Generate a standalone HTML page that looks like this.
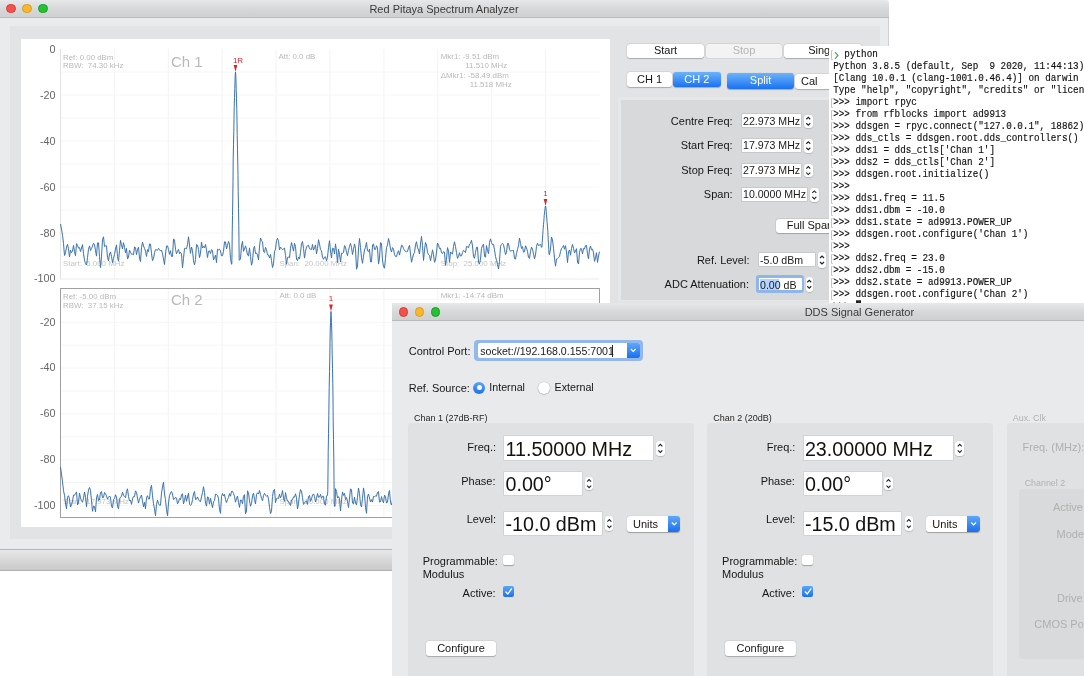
<!DOCTYPE html><html><head><meta charset="utf-8"><style>html,body{margin:0;padding:0;width:1084px;height:676px;overflow:hidden;background:#fff;position:relative;font-family:"Liberation Sans",sans-serif}</style></head><body><div style="position:absolute;left:0;top:0;width:1084px;height:676px;overflow:hidden;will-change:transform">
<div style="position:absolute;left:0px;top:0px;width:889px;height:17.5px;background:linear-gradient(#e7e8ea,#d6d7d9 55%,#cfd0d2);border-bottom:1px solid #b9babc;box-sizing:border-box;border-top-right-radius:3px"></div>
<div style="position:absolute;left:6.2px;top:3.6000000000000005px;width:9.6px;height:9.6px;border-radius:50%;background:#f4514d;box-sizing:border-box;border:0.5px solid #d63d39"></div>
<div style="position:absolute;left:22.2px;top:3.6000000000000005px;width:9.6px;height:9.6px;border-radius:50%;background:#f8b72c;box-sizing:border-box;border:0.5px solid #dc9c1e"></div>
<div style="position:absolute;left:38.2px;top:3.6000000000000005px;width:9.6px;height:9.6px;border-radius:50%;background:#25c135;box-sizing:border-box;border:0.5px solid #16a025"></div>
<div style="position:absolute;left:294.0px;top:2.0px;width:300px;height:14px;line-height:14px;font-size:11px;font-family:'Liberation Sans', sans-serif;color:#3a3a3a;text-align:center;white-space:pre;">Red Pitaya Spectrum Analyzer</div>
<div style="position:absolute;left:0px;top:17.5px;width:889px;height:531.5px;background:#eaebed"></div>
<div style="position:absolute;left:10px;top:26px;width:870px;height:513px;background:#e2e3e4"></div>
<div style="position:absolute;left:888px;top:17.5px;width:1px;height:531.5px;background:#cfd0d2"></div>
<div style="position:absolute;left:21px;top:39px;width:589px;height:488px;background:#ffffff"></div>
<svg style="position:absolute;left:0;top:0" width="1084" height="676"><line x1="114.4" y1="49" x2="114.4" y2="279" stroke="#f3f3f3" stroke-width="1"/><line x1="168.3" y1="49" x2="168.3" y2="279" stroke="#f3f3f3" stroke-width="1"/><line x1="222.2" y1="49" x2="222.2" y2="279" stroke="#f3f3f3" stroke-width="1"/><line x1="276.1" y1="49" x2="276.1" y2="279" stroke="#f3f3f3" stroke-width="1"/><line x1="330.0" y1="49" x2="330.0" y2="279" stroke="#f3f3f3" stroke-width="1"/><line x1="383.9" y1="49" x2="383.9" y2="279" stroke="#f3f3f3" stroke-width="1"/><line x1="437.8" y1="49" x2="437.8" y2="279" stroke="#f3f3f3" stroke-width="1"/><line x1="491.7" y1="49" x2="491.7" y2="279" stroke="#f3f3f3" stroke-width="1"/><line x1="545.6" y1="49" x2="545.6" y2="279" stroke="#f3f3f3" stroke-width="1"/><line x1="60.5" y1="72.0" x2="599.5" y2="72.0" stroke="#f6f6f6" stroke-width="1"/><line x1="60.5" y1="95.0" x2="599.5" y2="95.0" stroke="#f6f6f6" stroke-width="1"/><line x1="60.5" y1="118.0" x2="599.5" y2="118.0" stroke="#f6f6f6" stroke-width="1"/><line x1="60.5" y1="141.0" x2="599.5" y2="141.0" stroke="#f6f6f6" stroke-width="1"/><line x1="60.5" y1="164.0" x2="599.5" y2="164.0" stroke="#f6f6f6" stroke-width="1"/><line x1="60.5" y1="187.0" x2="599.5" y2="187.0" stroke="#f6f6f6" stroke-width="1"/><line x1="60.5" y1="210.0" x2="599.5" y2="210.0" stroke="#f6f6f6" stroke-width="1"/><line x1="60.5" y1="233.0" x2="599.5" y2="233.0" stroke="#f6f6f6" stroke-width="1"/><line x1="60.5" y1="256.0" x2="599.5" y2="256.0" stroke="#f6f6f6" stroke-width="1"/><line x1="60.5" y1="49" x2="60.5" y2="279" stroke="#e2e2e2" stroke-width="1"/><line x1="60.5" y1="279" x2="599.5" y2="279" stroke="#ececec" stroke-width="1"/></svg>
<div style="position:absolute;left:15.5px;top:41.7px;width:40px;height:14px;line-height:14px;font-size:10.8px;font-family:'Liberation Sans', sans-serif;color:#666;text-align:right;white-space:pre;">0</div>
<div style="position:absolute;left:15.5px;top:87.7px;width:40px;height:14px;line-height:14px;font-size:10.8px;font-family:'Liberation Sans', sans-serif;color:#666;text-align:right;white-space:pre;">-20</div>
<div style="position:absolute;left:15.5px;top:133.7px;width:40px;height:14px;line-height:14px;font-size:10.8px;font-family:'Liberation Sans', sans-serif;color:#666;text-align:right;white-space:pre;">-40</div>
<div style="position:absolute;left:15.5px;top:179.7px;width:40px;height:14px;line-height:14px;font-size:10.8px;font-family:'Liberation Sans', sans-serif;color:#666;text-align:right;white-space:pre;">-60</div>
<div style="position:absolute;left:15.5px;top:225.7px;width:40px;height:14px;line-height:14px;font-size:10.8px;font-family:'Liberation Sans', sans-serif;color:#666;text-align:right;white-space:pre;">-80</div>
<div style="position:absolute;left:15.5px;top:270.5px;width:40px;height:14px;line-height:14px;font-size:10.8px;font-family:'Liberation Sans', sans-serif;color:#666;text-align:right;white-space:pre;">-100</div>
<div style="position:absolute;left:63.0px;top:52.5px;width:300px;height:10px;line-height:10px;font-size:7.9px;font-family:'Liberation Sans', sans-serif;color:#b9b9b9;text-align:left;white-space:pre;">Ref: 0.00 dBm</div>
<div style="position:absolute;left:63.0px;top:61.3px;width:300px;height:10px;line-height:10px;font-size:7.9px;font-family:'Liberation Sans', sans-serif;color:#b9b9b9;text-align:left;white-space:pre;">RBW:  74.30 kHz</div>
<div style="position:absolute;left:171.0px;top:52.4px;width:300px;height:20px;line-height:20px;font-size:15px;font-family:'Liberation Sans', sans-serif;color:#b9b9b9;text-align:left;white-space:pre;">Ch 1</div>
<div style="position:absolute;left:278.5px;top:52.0px;width:300px;height:10px;line-height:10px;font-size:7.9px;font-family:'Liberation Sans', sans-serif;color:#b9b9b9;text-align:left;white-space:pre;">Att: 0.0 dB</div>
<div style="position:absolute;left:440.8px;top:52.0px;width:300px;height:10px;line-height:10px;font-size:7.9px;font-family:'Liberation Sans', sans-serif;color:#b9b9b9;text-align:left;white-space:pre;">Mkr1: -9.51 dBm</div>
<div style="position:absolute;left:465.3px;top:61.4px;width:300px;height:10px;line-height:10px;font-size:7.9px;font-family:'Liberation Sans', sans-serif;color:#b9b9b9;text-align:left;white-space:pre;">11.510 MHz</div>
<div style="position:absolute;left:440.8px;top:70.9px;width:300px;height:10px;line-height:10px;font-size:7.9px;font-family:'Liberation Sans', sans-serif;color:#b9b9b9;text-align:left;white-space:pre;">ΔMkr1: -58.49 dBm</div>
<div style="position:absolute;left:469.7px;top:80.0px;width:300px;height:10px;line-height:10px;font-size:7.9px;font-family:'Liberation Sans', sans-serif;color:#b9b9b9;text-align:left;white-space:pre;">11.518 MHz</div>
<div style="position:absolute;left:63.0px;top:258.6px;width:300px;height:10px;line-height:10px;font-size:7.9px;font-family:'Liberation Sans', sans-serif;color:#c6c6c6;text-align:left;white-space:pre;">Start:  5.000 MHz</div>
<div style="position:absolute;left:279.4px;top:258.6px;width:300px;height:10px;line-height:10px;font-size:7.9px;font-family:'Liberation Sans', sans-serif;color:#c6c6c6;text-align:left;white-space:pre;">Span:  20.000 MHz</div>
<div style="position:absolute;left:440.8px;top:258.6px;width:300px;height:10px;line-height:10px;font-size:7.9px;font-family:'Liberation Sans', sans-serif;color:#c6c6c6;text-align:left;white-space:pre;">Stop:  25.000 MHz</div>
<svg style="position:absolute;left:0;top:0" width="1084" height="676"><line x1="114.4" y1="288" x2="114.4" y2="517" stroke="#f3f3f3" stroke-width="1"/><line x1="168.3" y1="288" x2="168.3" y2="517" stroke="#f3f3f3" stroke-width="1"/><line x1="222.2" y1="288" x2="222.2" y2="517" stroke="#f3f3f3" stroke-width="1"/><line x1="276.1" y1="288" x2="276.1" y2="517" stroke="#f3f3f3" stroke-width="1"/><line x1="330.0" y1="288" x2="330.0" y2="517" stroke="#f3f3f3" stroke-width="1"/><line x1="383.9" y1="288" x2="383.9" y2="517" stroke="#f3f3f3" stroke-width="1"/><line x1="437.8" y1="288" x2="437.8" y2="517" stroke="#f3f3f3" stroke-width="1"/><line x1="491.7" y1="288" x2="491.7" y2="517" stroke="#f3f3f3" stroke-width="1"/><line x1="545.6" y1="288" x2="545.6" y2="517" stroke="#f3f3f3" stroke-width="1"/><line x1="60.5" y1="299.4" x2="599.5" y2="299.4" stroke="#f6f6f6" stroke-width="1"/><line x1="60.5" y1="322.4" x2="599.5" y2="322.4" stroke="#f6f6f6" stroke-width="1"/><line x1="60.5" y1="345.2" x2="599.5" y2="345.2" stroke="#f6f6f6" stroke-width="1"/><line x1="60.5" y1="368.1" x2="599.5" y2="368.1" stroke="#f6f6f6" stroke-width="1"/><line x1="60.5" y1="391.1" x2="599.5" y2="391.1" stroke="#f6f6f6" stroke-width="1"/><line x1="60.5" y1="413.9" x2="599.5" y2="413.9" stroke="#f6f6f6" stroke-width="1"/><line x1="60.5" y1="436.9" x2="599.5" y2="436.9" stroke="#f6f6f6" stroke-width="1"/><line x1="60.5" y1="459.8" x2="599.5" y2="459.8" stroke="#f6f6f6" stroke-width="1"/><line x1="60.5" y1="482.6" x2="599.5" y2="482.6" stroke="#f6f6f6" stroke-width="1"/><line x1="60.5" y1="505.6" x2="599.5" y2="505.6" stroke="#f6f6f6" stroke-width="1"/><rect x="60.5" y="288.5" width="539.0" height="229" fill="none" stroke="#a0a0a0" stroke-width="1"/></svg>
<div style="position:absolute;left:15.5px;top:314.5px;width:40px;height:14px;line-height:14px;font-size:10.8px;font-family:'Liberation Sans', sans-serif;color:#666;text-align:right;white-space:pre;">-20</div>
<div style="position:absolute;left:15.5px;top:360.2px;width:40px;height:14px;line-height:14px;font-size:10.8px;font-family:'Liberation Sans', sans-serif;color:#666;text-align:right;white-space:pre;">-40</div>
<div style="position:absolute;left:15.5px;top:406.2px;width:40px;height:14px;line-height:14px;font-size:10.8px;font-family:'Liberation Sans', sans-serif;color:#666;text-align:right;white-space:pre;">-60</div>
<div style="position:absolute;left:15.5px;top:452.2px;width:40px;height:14px;line-height:14px;font-size:10.8px;font-family:'Liberation Sans', sans-serif;color:#666;text-align:right;white-space:pre;">-80</div>
<div style="position:absolute;left:15.5px;top:497.7px;width:40px;height:14px;line-height:14px;font-size:10.8px;font-family:'Liberation Sans', sans-serif;color:#666;text-align:right;white-space:pre;">-100</div>
<div style="position:absolute;left:63.0px;top:292.0px;width:300px;height:10px;line-height:10px;font-size:7.9px;font-family:'Liberation Sans', sans-serif;color:#b9b9b9;text-align:left;white-space:pre;">Ref: -5.00 dBm</div>
<div style="position:absolute;left:63.0px;top:301.0px;width:300px;height:10px;line-height:10px;font-size:7.9px;font-family:'Liberation Sans', sans-serif;color:#b9b9b9;text-align:left;white-space:pre;">RBW:  37.15 kHz</div>
<div style="position:absolute;left:171.0px;top:290.0px;width:300px;height:20px;line-height:20px;font-size:15px;font-family:'Liberation Sans', sans-serif;color:#b9b9b9;text-align:left;white-space:pre;">Ch 2</div>
<div style="position:absolute;left:279.4px;top:291.3px;width:300px;height:10px;line-height:10px;font-size:7.9px;font-family:'Liberation Sans', sans-serif;color:#b9b9b9;text-align:left;white-space:pre;">Att: 0.0 dB</div>
<div style="position:absolute;left:440.8px;top:291.3px;width:300px;height:10px;line-height:10px;font-size:7.9px;font-family:'Liberation Sans', sans-serif;color:#b9b9b9;text-align:left;white-space:pre;">Mkr1: -14.74 dBm</div>
<div style="position:absolute;left:63.0px;top:497.0px;width:300px;height:10px;line-height:10px;font-size:7.9px;font-family:'Liberation Sans', sans-serif;color:#c6c6c6;text-align:left;white-space:pre;">Start:  17.973 MHz</div>
<div style="position:absolute;left:279.4px;top:497.0px;width:300px;height:10px;line-height:10px;font-size:7.9px;font-family:'Liberation Sans', sans-serif;color:#c6c6c6;text-align:left;white-space:pre;">Span:  10.000 MHz</div>
<div style="position:absolute;left:440.8px;top:497.0px;width:300px;height:10px;line-height:10px;font-size:7.9px;font-family:'Liberation Sans', sans-serif;color:#c6c6c6;text-align:left;white-space:pre;">Stop:  27.973 MHz</div>
<svg style="position:absolute;left:0;top:0" width="1084" height="676"><polyline points="60.5,224.0 61.5,229.1 62.5,235.2 63.5,243.5 64.5,255.5 65.5,252.9 66.5,247.1 67.5,244.4 68.5,248.8 69.5,256.7 70.5,250.2 71.5,252.6 72.5,251.3 73.5,245.4 74.5,251.7 75.5,255.7 76.5,243.6 77.5,245.5 78.5,248.1 79.5,247.6 80.5,251.5 81.5,248.0 82.5,244.6 83.5,253.6 84.5,260.2 85.5,263.6 86.5,265.0 87.5,257.6 88.5,249.3 89.5,245.9 90.5,250.5 91.5,248.6 92.5,246.1 93.5,243.3 94.5,244.6 95.5,250.8 96.5,256.1 97.5,242.9 98.5,242.9 99.5,256.3 100.5,267.6 101.5,256.8 102.5,239.7 103.5,236.8 104.5,246.5 105.5,245.8 106.5,245.8 107.5,257.2 108.5,260.9 109.5,254.0 110.5,251.9 111.5,256.4 112.5,262.6 113.5,258.4 114.5,254.6 115.5,249.1 116.5,244.9 117.5,256.5 118.5,261.2 119.5,250.4 120.5,240.4 121.5,244.6 122.5,249.0 123.5,242.7 124.5,247.4 125.5,252.7 126.5,248.4 127.5,259.0 128.5,257.1 129.5,250.2 130.5,252.1 131.5,254.3 132.5,254.1 133.5,254.8 134.5,247.0 135.5,247.6 136.5,254.6 137.5,249.5 138.5,247.2 139.5,258.0 140.5,261.6 141.5,247.8 142.5,242.1 143.5,246.0 144.5,248.3 145.5,251.1 146.5,256.4 147.5,249.6 148.5,251.5 149.5,243.9 150.5,244.1 151.5,253.6 152.5,260.7 153.5,258.5 154.5,252.8 155.5,249.6 156.5,249.8 157.5,250.4 158.5,248.3 159.5,249.5 160.5,251.0 161.5,250.0 162.5,253.9 163.5,259.0 164.5,264.5 165.5,254.0 166.5,246.1 167.5,245.8 168.5,249.5 169.5,254.3 170.5,250.7 171.5,256.5 172.5,256.4 173.5,238.9 174.5,240.1 175.5,249.2 176.5,253.8 177.5,251.3 178.5,249.3 179.5,253.7 180.5,252.2 181.5,254.1 182.5,267.7 183.5,258.4 184.5,248.3 185.5,248.4 186.5,248.8 187.5,244.6 188.5,236.8 189.5,245.1 190.5,253.4 191.5,247.1 192.5,250.4 193.5,260.9 194.5,264.8 195.5,259.7 196.5,244.6 197.5,245.1 198.5,249.4 199.5,257.6 200.5,253.2 201.5,242.0 202.5,248.0 203.5,246.4 204.5,247.9 205.5,244.4 206.5,249.8 207.5,257.5 208.5,251.2 209.5,250.9 210.5,253.6 211.5,249.7 212.5,250.5 213.5,260.0 214.5,257.7 215.5,255.1 216.5,262.6 217.5,249.2 218.5,249.9 219.5,249.1 220.5,250.9 221.5,255.8 222.5,255.6 223.5,251.3 224.5,241.8 225.5,241.9 226.5,248.9 227.5,245.3 228.5,241.5 229.5,244.2 230.5,258.4 231.5,264.2 231.5,264.2 231.8,264.2 232.0,253.0 232.2,234.0 232.5,215.6 232.5,215.6 232.8,198.1 233.0,181.3 233.2,158.9 233.5,144.8 233.5,144.8 233.8,131.6 234.0,118.6 234.2,107.5 234.5,97.4 234.5,97.4 234.8,88.5 235.0,81.0 235.2,75.2 235.5,72.0 235.5,72.0 235.8,75.2 236.0,81.5 236.2,89.4 236.5,98.8 236.5,98.8 236.8,109.5 237.0,121.3 237.2,135.6 237.5,149.8 237.5,149.8 237.8,164.8 238.0,175.7 238.2,191.6 238.5,208.3 238.5,208.3 238.8,225.7 239.0,243.8 239.2,260.2 239.5,260.2 239.5,260.2 240.5,258.9 241.5,246.0 242.5,241.4 243.5,251.3 244.5,249.0 245.5,245.9 246.5,249.5 247.5,255.0 248.5,255.9 249.5,247.9 250.5,256.6 251.5,265.2 252.5,261.5 253.5,248.7 254.5,246.4 255.5,253.5 256.5,253.1 257.5,255.1 258.5,259.8 259.5,247.1 260.5,238.0 261.5,240.5 262.5,242.1 263.5,251.6 264.5,252.5 265.5,247.4 266.5,249.6 267.5,254.8 268.5,254.9 269.5,257.9 270.5,254.5 271.5,260.5 272.5,267.5 273.5,263.8 274.5,251.8 275.5,249.2 276.5,240.6 277.5,238.3 278.5,241.2 279.5,249.9 280.5,247.1 281.5,248.3 282.5,249.6 283.5,248.9 284.5,248.0 285.5,255.5 286.5,264.3 287.5,257.4 288.5,257.1 289.5,257.9 290.5,248.2 291.5,242.6 292.5,246.7 293.5,251.1 294.5,243.3 295.5,246.5 296.5,259.0 297.5,260.7 298.5,257.1 299.5,258.9 300.5,252.5 301.5,243.7 302.5,241.5 303.5,248.3 304.5,258.1 305.5,251.3 306.5,247.0 307.5,245.7 308.5,245.1 309.5,248.7 310.5,249.1 311.5,249.6 312.5,244.5 313.5,250.1 314.5,247.9 315.5,244.9 316.5,253.8 317.5,248.5 318.5,239.7 319.5,243.8 320.5,249.8 321.5,250.8 322.5,257.1 323.5,259.3 324.5,257.2 325.5,256.8 326.5,260.8 327.5,257.2 328.5,247.6 329.5,240.7 330.5,251.0 331.5,257.8 332.5,248.3 333.5,248.5 334.5,253.9 335.5,243.9 336.5,251.6 337.5,262.5 338.5,249.2 339.5,254.4 340.5,262.0 341.5,253.1 342.5,253.3 343.5,252.6 344.5,245.6 345.5,247.1 346.5,252.5 347.5,255.6 348.5,250.3 349.5,246.4 350.5,243.5 351.5,247.4 352.5,254.5 353.5,249.5 354.5,243.9 355.5,248.5 356.5,269.2 357.5,266.1 358.5,249.0 359.5,238.5 360.5,247.4 361.5,257.8 362.5,263.3 363.5,256.1 364.5,250.0 365.5,247.3 366.5,242.4 367.5,250.8 368.5,251.6 369.5,249.2 370.5,261.9 371.5,261.9 372.5,244.8 373.5,244.0 374.5,249.3 375.5,249.4 376.5,245.7 377.5,247.7 378.5,264.1 379.5,258.1 380.5,242.7 381.5,243.3 382.5,259.9 383.5,266.6 384.5,268.2 385.5,258.3 386.5,247.4 387.5,245.1 388.5,238.5 389.5,242.3 390.5,249.2 391.5,251.9 392.5,247.6 393.5,249.2 394.5,254.5 395.5,256.4 396.5,256.7 397.5,252.7 398.5,250.7 399.5,255.1 400.5,250.2 401.5,245.2 402.5,245.6 403.5,248.8 404.5,250.1 405.5,251.6 406.5,251.7 407.5,251.5 408.5,247.8 409.5,245.3 410.5,254.0 411.5,262.2 412.5,258.4 413.5,254.0 414.5,252.7 415.5,244.9 416.5,241.7 417.5,247.7 418.5,249.9 419.5,254.0 420.5,244.0 421.5,236.5 422.5,245.5 423.5,260.5 424.5,250.1 425.5,242.5 426.5,245.1 427.5,252.4 428.5,254.6 429.5,255.3 430.5,260.8 431.5,255.9 432.5,249.8 433.5,254.8 434.5,262.3 435.5,260.1 436.5,252.0 437.5,243.0 438.5,244.9 439.5,248.7 440.5,248.1 441.5,252.8 442.5,253.7 443.5,251.7 444.5,252.2 445.5,265.4 446.5,259.2 447.5,247.6 448.5,251.1 449.5,262.3 450.5,251.9 451.5,253.1 452.5,254.2 453.5,246.4 454.5,241.8 455.5,246.6 456.5,252.6 457.5,258.4 458.5,256.4 459.5,252.7 460.5,256.1 461.5,255.7 462.5,252.6 463.5,250.4 464.5,251.0 465.5,252.6 466.5,246.5 467.5,246.7 468.5,247.9 469.5,244.1 470.5,243.3 471.5,240.3 472.5,246.0 473.5,256.6 474.5,258.3 475.5,252.5 476.5,247.3 477.5,247.2 478.5,262.6 479.5,263.9 480.5,259.0 481.5,248.4 482.5,245.4 483.5,244.1 484.5,256.1 485.5,257.3 486.5,245.6 487.5,250.4 488.5,253.6 489.5,242.4 490.5,238.9 491.5,242.7 492.5,244.7 493.5,244.4 494.5,249.9 495.5,256.5 496.5,260.4 497.5,264.3 498.5,269.0 499.5,261.3 500.5,246.3 501.5,244.3 502.5,243.3 503.5,244.5 504.5,249.6 505.5,254.6 506.5,252.6 507.5,243.5 508.5,243.5 509.5,249.4 510.5,251.3 511.5,250.7 512.5,250.4 513.5,250.5 514.5,258.6 515.5,259.1 516.5,253.5 517.5,249.3 518.5,245.8 519.5,238.1 520.5,243.4 521.5,248.5 522.5,246.6 523.5,252.2 524.5,251.8 525.5,245.8 526.5,247.9 527.5,251.4 528.5,257.3 529.5,258.4 530.5,251.4 531.5,247.1 532.5,249.1 533.5,253.8 534.5,258.9 535.5,254.9 536.5,246.3 537.5,243.2 538.5,245.7 539.5,245.0 540.5,244.3 541.5,247.3 541.5,247.3 541.8,247.3 542.0,246.5 542.2,242.2 542.5,238.1 542.5,238.1 542.8,234.2 543.0,230.4 543.2,228.4 543.5,224.7 543.5,224.7 543.8,221.3 544.0,218.7 544.2,215.7 544.5,212.9 544.5,212.9 544.8,210.5 545.0,208.4 545.2,206.9 545.5,206.0 545.5,206.0 545.8,206.9 546.0,209.0 546.2,211.6 546.5,214.6 546.5,214.6 546.8,218.0 547.0,221.7 547.2,223.1 547.5,226.9 547.5,226.9 547.8,230.9 548.0,235.1 548.2,239.5 548.5,244.2 548.5,244.2 548.8,249.1 549.0,254.1 549.2,254.6 549.5,254.6 549.5,254.6 550.5,249.0 551.5,237.1 552.5,239.9 553.5,248.2 554.5,258.0 555.5,266.2 556.5,259.0 557.5,258.6 558.5,257.7 559.5,256.3 560.5,251.7 561.5,248.3 562.5,247.4 563.5,245.4 564.5,249.2 565.5,245.7 566.5,251.9 567.5,262.6 568.5,251.7 569.5,250.0 570.5,255.2 571.5,248.5 572.5,244.4 573.5,248.3 574.5,253.0 575.5,251.0 576.5,248.7 577.5,262.1 578.5,264.0 579.5,252.3 580.5,248.4 581.5,248.8 582.5,253.9 583.5,248.5 584.5,249.0 585.5,245.7 586.5,245.4 587.5,254.2 588.5,258.8 589.5,249.1 590.5,246.0 591.5,249.8 592.5,249.2 593.5,252.8 594.5,261.4 595.5,257.8 596.5,252.7 597.5,262.4 598.5,256.0 599.5,251.7" fill="none" stroke="#3a72ad" stroke-width="1"/><polyline points="60.5,467.0 61.5,474.1 62.5,481.9 63.5,490.7 64.5,495.2 65.5,503.0 66.5,508.8 67.5,497.2 68.5,495.7 69.5,498.9 70.5,507.0 71.5,504.8 72.5,501.4 73.5,495.1 74.5,495.3 75.5,493.7 76.5,491.9 77.5,504.8 78.5,503.0 79.5,493.0 80.5,498.1 81.5,500.6 82.5,502.3 83.5,498.1 84.5,492.0 85.5,497.3 86.5,506.7 87.5,496.3 88.5,489.9 89.5,487.5 90.5,490.3 91.5,500.9 92.5,511.3 93.5,506.1 94.5,506.5 95.5,511.9 96.5,497.8 97.5,494.5 98.5,500.5 99.5,500.0 100.5,492.3 101.5,491.6 102.5,497.7 103.5,497.4 104.5,492.4 105.5,493.9 106.5,495.8 107.5,499.1 108.5,497.5 109.5,496.0 110.5,497.2 111.5,506.6 112.5,507.9 113.5,499.6 114.5,498.6 115.5,494.7 116.5,497.1 117.5,506.3 118.5,508.9 119.5,499.2 120.5,497.2 121.5,496.2 122.5,492.2 123.5,495.2 124.5,496.7 125.5,497.7 126.5,491.5 127.5,488.8 128.5,496.5 129.5,501.1 130.5,500.1 131.5,504.4 132.5,499.0 133.5,496.5 134.5,496.7 135.5,490.9 136.5,492.3 137.5,498.1 138.5,503.1 139.5,499.2 140.5,496.9 141.5,495.0 142.5,500.9 143.5,506.8 144.5,502.3 145.5,508.8 146.5,497.5 147.5,495.7 148.5,499.1 149.5,498.9 150.5,488.4 151.5,485.3 152.5,495.8 153.5,503.8 154.5,508.9 155.5,515.7 156.5,504.5 157.5,500.1 158.5,503.6 159.5,505.3 160.5,505.2 161.5,493.1 162.5,486.8 163.5,482.2 164.5,494.0 165.5,499.6 166.5,509.6 167.5,515.7 168.5,503.1 169.5,495.5 170.5,493.0 171.5,491.5 172.5,494.0 173.5,499.6 174.5,499.0 175.5,497.2 176.5,498.2 177.5,503.8 178.5,502.0 179.5,498.5 180.5,499.6 181.5,494.9 182.5,493.7 183.5,503.9 184.5,500.4 185.5,495.0 186.5,501.3 187.5,497.0 188.5,493.1 189.5,504.0 190.5,505.4 191.5,504.4 192.5,499.6 193.5,493.9 194.5,491.5 195.5,499.4 196.5,499.2 197.5,496.9 198.5,499.6 199.5,501.1 200.5,501.7 201.5,496.8 202.5,492.6 203.5,486.7 204.5,492.5 205.5,503.2 206.5,506.1 207.5,496.9 208.5,497.5 209.5,504.2 210.5,498.4 211.5,503.0 212.5,507.7 213.5,501.9 214.5,500.3 215.5,494.2 216.5,494.5 217.5,495.3 218.5,498.4 219.5,509.7 220.5,513.3 221.5,496.6 222.5,493.6 223.5,495.9 224.5,494.2 225.5,499.6 226.5,502.6 227.5,499.5 228.5,497.5 229.5,493.6 230.5,496.2 231.5,491.3 232.5,491.3 233.5,493.4 234.5,496.3 235.5,502.2 236.5,498.4 237.5,496.0 238.5,502.5 239.5,507.4 240.5,500.0 241.5,500.2 242.5,503.8 243.5,496.3 244.5,494.6 245.5,513.9 246.5,511.0 247.5,490.8 248.5,493.1 249.5,500.9 250.5,506.2 251.5,503.6 252.5,495.7 253.5,493.2 254.5,499.5 255.5,504.0 256.5,494.4 257.5,492.8 258.5,494.1 259.5,490.5 260.5,494.5 261.5,498.3 262.5,500.8 263.5,495.5 264.5,493.3 265.5,495.2 266.5,496.3 267.5,495.3 268.5,498.9 269.5,507.3 270.5,513.6 271.5,511.4 272.5,496.4 273.5,490.3 274.5,489.3 275.5,502.6 276.5,498.6 277.5,498.2 278.5,498.6 279.5,494.1 280.5,497.9 281.5,495.5 282.5,490.5 283.5,497.9 284.5,501.4 285.5,492.6 286.5,497.9 287.5,501.2 288.5,501.5 289.5,503.9 290.5,505.5 291.5,499.9 292.5,499.8 293.5,496.9 294.5,497.2 295.5,493.8 296.5,497.7 297.5,509.0 298.5,503.4 299.5,494.6 300.5,489.6 301.5,491.2 302.5,497.6 303.5,504.4 304.5,503.2 305.5,501.2 306.5,501.1 307.5,504.4 308.5,496.4 309.5,495.4 310.5,501.4 311.5,498.9 312.5,495.1 313.5,493.9 314.5,496.4 315.5,502.0 316.5,498.5 317.5,493.6 318.5,497.4 319.5,497.0 320.5,494.4 321.5,498.4 322.5,496.3 323.5,496.3 324.5,504.1 325.5,505.2 326.5,496.1 327.0,496.1 327.2,495.4 327.5,495.4 327.5,495.4 327.8,491.2 328.0,472.1 328.2,452.4 328.5,433.7 328.5,433.7 328.8,415.8 329.0,398.9 329.2,387.3 329.5,371.6 329.5,371.6 329.8,357.2 330.0,343.2 330.2,332.1 330.5,322.7 330.5,322.7 330.8,315.5 331.0,311.5 331.2,315.4 331.5,322.7 331.5,322.7 331.8,332.0 332.0,342.5 332.2,354.8 332.5,368.4 332.5,368.4 332.8,383.2 333.0,399.0 333.2,420.8 333.5,439.5 333.5,439.5 333.8,459.2 334.0,480.5 334.2,502.0 334.5,506.4 334.5,506.4 334.8,506.4 335.0,506.4 335.5,488.6 336.5,491.3 337.5,498.1 338.5,496.6 339.5,498.6 340.5,510.9 341.5,499.7 342.5,491.9 343.5,495.4 344.5,493.4 345.5,499.6 346.5,497.6 347.5,501.3 348.5,507.5 349.5,498.1 350.5,488.8 351.5,489.8 352.5,503.1 353.5,504.0 354.5,497.1 355.5,503.1 356.5,504.9 357.5,497.2 358.5,488.0 359.5,493.6 360.5,504.6 361.5,506.9 362.5,498.2 363.5,487.9 364.5,494.4 365.5,507.3 366.5,513.3 367.5,496.6 368.5,494.0 369.5,498.1 370.5,502.0 371.5,499.6 372.5,502.1 373.5,496.4 374.5,496.6 375.5,496.0 376.5,496.2 377.5,492.3 378.5,491.6 379.5,502.1 380.5,501.8 381.5,496.6 382.5,500.7 383.5,502.8 384.5,495.1 385.5,496.7 386.5,503.0 387.5,502.2 388.5,493.9 389.5,490.5 390.5,502.6 391.5,505.0 392.5,500.2 393.5,498.8 394.5,500.0 395.5,496.0 396.5,492.8 397.5,493.3 398.5,494.3 399.5,493.7 400.5,494.2 401.5,498.0 402.5,495.5 403.5,498.1 404.5,496.2 405.5,503.3 406.5,510.5 407.5,502.6 408.5,495.8 409.5,497.3 410.5,495.6 411.5,489.4 412.5,492.3 413.5,496.3 414.5,496.0 415.5,499.1 416.5,505.3 417.5,507.8 418.5,508.0 419.5,503.8 420.5,497.6 421.5,496.9 422.5,496.4 423.5,496.1 424.5,494.1 425.5,490.1 426.5,494.2 427.5,496.4 428.5,494.6 429.5,498.4 430.5,503.3 431.5,505.7 432.5,506.4 433.5,490.1 434.5,489.8 435.5,491.7 436.5,508.0 437.5,513.3 438.5,492.4 439.5,495.5 440.5,501.6 441.5,499.3 442.5,496.3 443.5,490.8 444.5,499.7 445.5,503.8 446.5,499.0 447.5,497.2 448.5,500.9 449.5,498.2 450.5,497.7 451.5,492.4 452.5,487.3 453.5,494.3 454.5,501.2 455.5,501.2 456.5,494.8 457.5,496.4 458.5,501.0 459.5,502.6 460.5,510.6 461.5,510.1 462.5,492.2 463.5,487.5 464.5,500.1 465.5,511.4 466.5,509.2 467.5,502.8 468.5,494.3 469.5,494.1 470.5,497.7 471.5,491.0 472.5,485.8 473.5,494.0 474.5,517.2 475.5,515.9 476.5,496.6 477.5,493.1 478.5,495.6 479.5,496.7 480.5,504.3 481.5,498.0 482.5,495.4 483.5,503.3 484.5,499.5 485.5,500.2 486.5,500.4 487.5,500.1 488.5,501.2 489.5,494.5 490.5,487.2 491.5,485.2 492.5,489.8 493.5,495.1 494.5,500.8 495.5,504.7 496.5,506.8 497.5,502.0 498.5,495.0 499.5,490.9 500.5,487.9 501.5,494.9 502.5,502.8 503.5,502.8 504.5,497.8 505.5,498.0 506.5,502.6 507.5,500.8 508.5,502.7 509.5,502.4 510.5,502.0 511.5,503.1 512.5,494.7 513.5,491.3 514.5,489.7 515.5,493.2 516.5,507.6 517.5,510.9 518.5,501.0 519.5,501.6 520.5,506.4 521.5,506.6 522.5,501.6 523.5,491.2 524.5,491.9 525.5,500.8 526.5,507.5 527.5,498.5 528.5,492.3 529.5,492.0 530.5,491.3 531.5,493.7 532.5,501.3 533.5,495.7 534.5,499.1 535.5,512.5 536.5,508.7 537.5,497.3 538.5,493.2 539.5,498.3 540.5,507.1 541.5,505.5 542.5,504.3 543.5,499.0 544.5,497.3 545.5,496.2 546.5,500.3 547.5,500.9 548.5,491.7 549.5,493.5 550.5,495.6 551.5,493.4 552.5,495.3 553.5,505.9 554.5,513.9 555.5,506.7 556.5,496.6 557.5,493.8 558.5,505.9 559.5,502.4 560.5,495.5 561.5,492.2 562.5,493.5 563.5,493.1 564.5,497.5 565.5,502.7 566.5,501.7 567.5,499.7 568.5,498.9 569.5,505.9 570.5,495.6 571.5,489.8 572.5,493.7 573.5,493.5 574.5,492.7 575.5,496.0 576.5,497.2 577.5,493.7 578.5,498.9 579.5,510.3 580.5,507.1 581.5,499.9 582.5,498.6 583.5,498.0 584.5,500.2 585.5,503.4 586.5,495.2 587.5,487.8 588.5,493.0 589.5,496.2 590.5,501.5 591.5,500.0 592.5,508.0 593.5,515.7 594.5,498.9 595.5,492.0 596.5,488.6 597.5,485.0 598.5,489.5 599.5,498.8" fill="none" stroke="#3a72ad" stroke-width="1"/><path d="M233.7,65 L237.3,65 L235.5,72 Z" fill="#d9232a"/><path d="M543.7,199 L547.3,199 L545.5,206 Z" fill="#d9232a"/><path d="M329.2,304.5 L332.8,304.5 L331,311.5 Z" fill="#d9232a"/></svg>
<div style="position:absolute;left:223.0px;top:55.7px;width:30px;height:10px;line-height:10px;font-size:8px;font-family:'Liberation Sans', sans-serif;color:#d9232a;text-align:center;white-space:pre;">1R</div>
<div style="position:absolute;left:530.5px;top:189.0px;width:30px;height:10px;line-height:10px;font-size:8px;font-family:'Liberation Sans', sans-serif;color:#d9232a;text-align:center;white-space:pre;">1</div>
<div style="position:absolute;left:316.0px;top:294.0px;width:30px;height:10px;line-height:10px;font-size:8px;font-family:'Liberation Sans', sans-serif;color:#d9232a;text-align:center;white-space:pre;">1</div>
<div style="position:absolute;left:0px;top:549px;width:889px;height:22px;background:linear-gradient(#e8e8e8,#c9c9c9);border-top:1px solid #b5b5b5;border-bottom:1px solid #b0b0b0;box-sizing:border-box"></div>
<div style="position:absolute;left:627px;top:44px;width:77px;height:14px;background:#ffffff;border-radius:3px;box-shadow:0 0.5px 1px rgba(0,0,0,.22),0 0 0 0.5px rgba(0,0,0,.08)"></div>
<div style="position:absolute;left:615.5px;top:43.2px;width:100px;height:14px;line-height:14px;font-size:11px;font-family:'Liberation Sans', sans-serif;color:#161616;text-align:center;white-space:pre;">Start</div>
<div style="position:absolute;left:706px;top:44px;width:76px;height:14px;background:#f3f3f3;border-radius:3px;box-shadow:0 0 0 0.5px rgba(0,0,0,.12)"></div>
<div style="position:absolute;left:694.0px;top:43.2px;width:100px;height:14px;line-height:14px;font-size:11px;font-family:'Liberation Sans', sans-serif;color:#b4b4b4;text-align:center;white-space:pre;">Stop</div>
<div style="position:absolute;left:784px;top:44px;width:78px;height:14px;background:#ffffff;border-radius:3px;box-shadow:0 0.5px 1px rgba(0,0,0,.22),0 0 0 0.5px rgba(0,0,0,.08)"></div>
<div style="position:absolute;left:773.5px;top:43.2px;width:100px;height:14px;line-height:14px;font-size:11px;font-family:'Liberation Sans', sans-serif;color:#161616;text-align:center;white-space:pre;">Single</div>
<div style="position:absolute;left:627px;top:72px;width:45px;height:15px;background:#ffffff;border-radius:3px;box-shadow:0 0.5px 1px rgba(0,0,0,.22),0 0 0 0.5px rgba(0,0,0,.08)"></div>
<div style="position:absolute;left:599.5px;top:71.7px;width:100px;height:14px;line-height:14px;font-size:11px;font-family:'Liberation Sans', sans-serif;color:#161616;text-align:center;white-space:pre;">CH 1</div>
<div style="position:absolute;left:673px;top:72px;width:47.5px;height:15px;background:linear-gradient(#6cb3fa,#1a72f2);border-radius:3px;box-shadow:0 0.5px 1px rgba(0,0,0,.25)"></div>
<div style="position:absolute;left:646.8px;top:71.7px;width:100px;height:14px;line-height:14px;font-size:11px;font-family:'Liberation Sans', sans-serif;color:#ffffff;text-align:center;white-space:pre;">CH 2</div>
<div style="position:absolute;left:727px;top:73px;width:67px;height:16px;background:linear-gradient(#6cb3fa,#1a72f2);border-radius:3px;box-shadow:0 0.5px 1px rgba(0,0,0,.25)"></div>
<div style="position:absolute;left:710.5px;top:73.2px;width:100px;height:14px;line-height:14px;font-size:11px;font-family:'Liberation Sans', sans-serif;color:#ffffff;text-align:center;white-space:pre;">Split</div>
<div style="position:absolute;left:795px;top:74px;width:65px;height:15px;background:#ffffff;border-radius:3px;box-shadow:0 0.5px 1px rgba(0,0,0,.22),0 0 0 0.5px rgba(0,0,0,.08)"></div>
<div style="position:absolute;left:759.3px;top:73.7px;width:100px;height:14px;line-height:14px;font-size:11px;font-family:'Liberation Sans', sans-serif;color:#161616;text-align:center;white-space:pre;">Cal</div>
<div style="position:absolute;left:618px;top:97px;width:262px;height:204px;background:#e6e7e8"></div>
<div style="position:absolute;left:621px;top:100px;width:259px;height:200px;background:#d8d9db"></div>
<div style="position:absolute;left:612.6px;top:113.5px;width:120px;height:14px;line-height:14px;font-size:11px;font-family:'Liberation Sans', sans-serif;color:#161616;text-align:right;white-space:pre;">Centre Freq:</div>
<div style="position:absolute;left:741.5px;top:114.2px;width:59.5px;height:13.299999999999997px;background:#fff;box-shadow:0 0 0 0.5px rgba(0,0,0,.15)"></div>
<div style="position:absolute;left:743.0px;top:113.8px;width:300px;height:14px;line-height:14px;font-size:10.6px;font-family:'Liberation Sans', sans-serif;color:#1a1a1a;text-align:left;white-space:pre;">22.973 MHz</div>
<div style="position:absolute;left:804px;top:114.5px;width:8.600000000000023px;height:13.5px;background:#fff;border-radius:3px;box-shadow:0 0.5px 1px rgba(0,0,0,.3)"></div>
<svg style="position:absolute;left:0;top:0" width="1084" height="676"><path d="M806.3,119.25 L808.3,117.25 L810.3,119.25 M806.3,123.25 L808.3,125.25 L810.3,123.25" fill="none" stroke="#222" stroke-width="1.1"/></svg>
<div style="position:absolute;left:612.6px;top:138.0px;width:120px;height:14px;line-height:14px;font-size:11px;font-family:'Liberation Sans', sans-serif;color:#161616;text-align:right;white-space:pre;">Start Freq:</div>
<div style="position:absolute;left:741.5px;top:138.7px;width:59.5px;height:13.300000000000011px;background:#fff;box-shadow:0 0 0 0.5px rgba(0,0,0,.15)"></div>
<div style="position:absolute;left:743.0px;top:138.2px;width:300px;height:14px;line-height:14px;font-size:10.6px;font-family:'Liberation Sans', sans-serif;color:#1a1a1a;text-align:left;white-space:pre;">17.973 MHz</div>
<div style="position:absolute;left:804px;top:139.0px;width:8.600000000000023px;height:13.5px;background:#fff;border-radius:3px;box-shadow:0 0.5px 1px rgba(0,0,0,.3)"></div>
<svg style="position:absolute;left:0;top:0" width="1084" height="676"><path d="M806.3,143.75 L808.3,141.75 L810.3,143.75 M806.3,147.75 L808.3,149.75 L810.3,147.75" fill="none" stroke="#222" stroke-width="1.1"/></svg>
<div style="position:absolute;left:612.6px;top:162.8px;width:120px;height:14px;line-height:14px;font-size:11px;font-family:'Liberation Sans', sans-serif;color:#161616;text-align:right;white-space:pre;">Stop Freq:</div>
<div style="position:absolute;left:741.5px;top:163.5px;width:59.5px;height:13.300000000000011px;background:#fff;box-shadow:0 0 0 0.5px rgba(0,0,0,.15)"></div>
<div style="position:absolute;left:743.0px;top:163.1px;width:300px;height:14px;line-height:14px;font-size:10.6px;font-family:'Liberation Sans', sans-serif;color:#1a1a1a;text-align:left;white-space:pre;">27.973 MHz</div>
<div style="position:absolute;left:804px;top:163.8px;width:8.600000000000023px;height:13.5px;background:#fff;border-radius:3px;box-shadow:0 0.5px 1px rgba(0,0,0,.3)"></div>
<svg style="position:absolute;left:0;top:0" width="1084" height="676"><path d="M806.3,168.55 L808.3,166.55 L810.3,168.55 M806.3,172.55 L808.3,174.55 L810.3,172.55" fill="none" stroke="#222" stroke-width="1.1"/></svg>
<div style="position:absolute;left:612.6px;top:187.2px;width:120px;height:14px;line-height:14px;font-size:11px;font-family:'Liberation Sans', sans-serif;color:#161616;text-align:right;white-space:pre;">Span:</div>
<div style="position:absolute;left:741.5px;top:187.89999999999998px;width:65.5px;height:13.300000000000011px;background:#fff;box-shadow:0 0 0 0.5px rgba(0,0,0,.15)"></div>
<div style="position:absolute;left:743.0px;top:187.4px;width:300px;height:14px;line-height:14px;font-size:10.6px;font-family:'Liberation Sans', sans-serif;color:#1a1a1a;text-align:left;white-space:pre;">10.0000 MHz</div>
<div style="position:absolute;left:810px;top:188.2px;width:8.600000000000023px;height:13.5px;background:#fff;border-radius:3px;box-shadow:0 0.5px 1px rgba(0,0,0,.3)"></div>
<svg style="position:absolute;left:0;top:0" width="1084" height="676"><path d="M812.3,192.95 L814.3,190.95 L816.3,192.95 M812.3,196.95 L814.3,198.95 L816.3,196.95" fill="none" stroke="#222" stroke-width="1.1"/></svg>
<div style="position:absolute;left:776px;top:219px;width:96px;height:14px;background:#ffffff;border-radius:3px;box-shadow:0 0.5px 1px rgba(0,0,0,.22),0 0 0 0.5px rgba(0,0,0,.08)"></div>
<div style="position:absolute;left:760.0px;top:218.2px;width:100px;height:14px;line-height:14px;font-size:11px;font-family:'Liberation Sans', sans-serif;color:#161616;text-align:center;white-space:pre;">Full Span</div>
<div style="position:absolute;left:629.5px;top:252.8px;width:120px;height:14px;line-height:14px;font-size:11px;font-family:'Liberation Sans', sans-serif;color:#161616;text-align:right;white-space:pre;">Ref. Level:</div>
<div style="position:absolute;left:758.6px;top:253px;width:56.60000000000002px;height:13.300000000000011px;background:#fff;box-shadow:0 0 0 0.5px rgba(0,0,0,.15)"></div>
<div style="position:absolute;left:760.1px;top:252.5px;width:300px;height:14px;line-height:14px;font-size:10.6px;font-family:'Liberation Sans', sans-serif;color:#1a1a1a;text-align:left;white-space:pre;">-5.0 dBm</div>
<div style="position:absolute;left:818px;top:252px;width:8px;height:16px;background:#fff;border-radius:3px;box-shadow:0 0.5px 1px rgba(0,0,0,.3)"></div>
<svg style="position:absolute;left:0;top:0" width="1084" height="676"><path d="M820.0,258.0 L822.0,256.0 L824.0,258.0 M820.0,262.0 L822.0,264.0 L824.0,262.0" fill="none" stroke="#222" stroke-width="1.1"/></svg>
<div style="position:absolute;left:629.0px;top:277.2px;width:120px;height:14px;line-height:14px;font-size:11px;font-family:'Liberation Sans', sans-serif;color:#161616;text-align:right;white-space:pre;">ADC Attenuation:</div>
<div style="position:absolute;left:755.6px;top:275px;width:48.69999999999993px;height:18.30000000000001px;background:#8fb6ea;border-radius:3px"></div>
<div style="position:absolute;left:758.6px;top:278px;width:43.0px;height:12px;background:#fff"></div>
<div style="position:absolute;left:759.5px;top:279px;width:19.5px;height:10.5px;background:#b3d4fc"></div>
<div style="position:absolute;left:760.0px;top:277.5px;width:100px;height:14px;line-height:14px;font-size:10.6px;font-family:'Liberation Sans', sans-serif;color:#1a1a1a;text-align:left;white-space:pre;">0.00 dB</div>
<div style="position:absolute;left:805.7px;top:276.5px;width:7.099999999999909px;height:15.5px;background:#fff;border-radius:3px;box-shadow:0 0.5px 1px rgba(0,0,0,.3)"></div>
<svg style="position:absolute;left:0;top:0" width="1084" height="676"><path d="M807.25,282.25 L809.25,280.25 L811.25,282.25 M807.25,286.25 L809.25,288.25 L811.25,286.25" fill="none" stroke="#222" stroke-width="1.1"/></svg>
<div style="position:absolute;left:829px;top:46px;width:255px;height:257px;background:#ffffff"></div>
<div style="position:absolute;left:833.2px;top:49.4px;width:400px;height:12px;line-height:12px;font-size:9.3px;font-family:'Liberation Mono', monospace;color:#111;text-align:left;white-space:pre;transform:scaleY(1.12);-webkit-text-stroke:0.15px #111">&nbsp; python</div>
<div style="position:absolute;left:830.5px;top:50.4px;width:1.0px;height:9.0px;background:#c4c4c4"></div>
<div style="position:absolute;left:830.5px;top:50.4px;width:2.0px;height:0.7999999999999972px;background:#d4d4d4"></div>
<div style="position:absolute;left:830.5px;top:58.6px;width:2.0px;height:0.7999999999999972px;background:#d4d4d4"></div>
<div style="position:absolute;left:833.2px;top:61.4px;width:400px;height:12px;line-height:12px;font-size:9.3px;font-family:'Liberation Mono', monospace;color:#111;text-align:left;white-space:pre;transform:scaleY(1.12);-webkit-text-stroke:0.15px #111">Python 3.8.5 (default, Sep  9 2020, 11:44:13)</div>
<div style="position:absolute;left:833.2px;top:73.4px;width:400px;height:12px;line-height:12px;font-size:9.3px;font-family:'Liberation Mono', monospace;color:#111;text-align:left;white-space:pre;transform:scaleY(1.12);-webkit-text-stroke:0.15px #111">[Clang 10.0.1 (clang-1001.0.46.4)] on darwin</div>
<div style="position:absolute;left:833.2px;top:85.4px;width:400px;height:12px;line-height:12px;font-size:9.3px;font-family:'Liberation Mono', monospace;color:#111;text-align:left;white-space:pre;transform:scaleY(1.12);-webkit-text-stroke:0.15px #111">Type "help", "copyright", "credits" or "license" for more information.</div>
<div style="position:absolute;left:833.2px;top:97.4px;width:400px;height:12px;line-height:12px;font-size:9.3px;font-family:'Liberation Mono', monospace;color:#111;text-align:left;white-space:pre;transform:scaleY(1.12);-webkit-text-stroke:0.15px #111">&gt;&gt;&gt; import rpyc</div>
<div style="position:absolute;left:830.5px;top:98.4px;width:1.0px;height:9.0px;background:#c4c4c4"></div>
<div style="position:absolute;left:830.5px;top:98.4px;width:2.0px;height:0.7999999999999972px;background:#d4d4d4"></div>
<div style="position:absolute;left:830.5px;top:106.60000000000001px;width:2.0px;height:0.7999999999999972px;background:#d4d4d4"></div>
<div style="position:absolute;left:833.2px;top:109.4px;width:400px;height:12px;line-height:12px;font-size:9.3px;font-family:'Liberation Mono', monospace;color:#111;text-align:left;white-space:pre;transform:scaleY(1.12);-webkit-text-stroke:0.15px #111">&gt;&gt;&gt; from rfblocks import ad9913</div>
<div style="position:absolute;left:830.5px;top:110.4px;width:1.0px;height:9.0px;background:#c4c4c4"></div>
<div style="position:absolute;left:830.5px;top:110.4px;width:2.0px;height:0.7999999999999972px;background:#d4d4d4"></div>
<div style="position:absolute;left:830.5px;top:118.60000000000001px;width:2.0px;height:0.7999999999999972px;background:#d4d4d4"></div>
<div style="position:absolute;left:833.2px;top:121.4px;width:400px;height:12px;line-height:12px;font-size:9.3px;font-family:'Liberation Mono', monospace;color:#111;text-align:left;white-space:pre;transform:scaleY(1.12);-webkit-text-stroke:0.15px #111">&gt;&gt;&gt; ddsgen = rpyc.connect("127.0.0.1", 18862)</div>
<div style="position:absolute;left:830.5px;top:122.4px;width:1.0px;height:9.0px;background:#c4c4c4"></div>
<div style="position:absolute;left:830.5px;top:122.4px;width:2.0px;height:0.7999999999999972px;background:#d4d4d4"></div>
<div style="position:absolute;left:830.5px;top:130.6px;width:2.0px;height:0.8000000000000114px;background:#d4d4d4"></div>
<div style="position:absolute;left:833.2px;top:133.4px;width:400px;height:12px;line-height:12px;font-size:9.3px;font-family:'Liberation Mono', monospace;color:#111;text-align:left;white-space:pre;transform:scaleY(1.12);-webkit-text-stroke:0.15px #111">&gt;&gt;&gt; dds_ctls = ddsgen.root.dds_controllers()</div>
<div style="position:absolute;left:830.5px;top:134.4px;width:1.0px;height:9.0px;background:#c4c4c4"></div>
<div style="position:absolute;left:830.5px;top:134.4px;width:2.0px;height:0.8000000000000114px;background:#d4d4d4"></div>
<div style="position:absolute;left:830.5px;top:142.6px;width:2.0px;height:0.8000000000000114px;background:#d4d4d4"></div>
<div style="position:absolute;left:833.2px;top:145.4px;width:400px;height:12px;line-height:12px;font-size:9.3px;font-family:'Liberation Mono', monospace;color:#111;text-align:left;white-space:pre;transform:scaleY(1.12);-webkit-text-stroke:0.15px #111">&gt;&gt;&gt; dds1 = dds_ctls['Chan 1']</div>
<div style="position:absolute;left:830.5px;top:146.4px;width:1.0px;height:9.0px;background:#c4c4c4"></div>
<div style="position:absolute;left:830.5px;top:146.4px;width:2.0px;height:0.8000000000000114px;background:#d4d4d4"></div>
<div style="position:absolute;left:830.5px;top:154.6px;width:2.0px;height:0.8000000000000114px;background:#d4d4d4"></div>
<div style="position:absolute;left:833.2px;top:157.4px;width:400px;height:12px;line-height:12px;font-size:9.3px;font-family:'Liberation Mono', monospace;color:#111;text-align:left;white-space:pre;transform:scaleY(1.12);-webkit-text-stroke:0.15px #111">&gt;&gt;&gt; dds2 = dds_ctls['Chan 2']</div>
<div style="position:absolute;left:830.5px;top:158.4px;width:1.0px;height:9.0px;background:#c4c4c4"></div>
<div style="position:absolute;left:830.5px;top:158.4px;width:2.0px;height:0.8000000000000114px;background:#d4d4d4"></div>
<div style="position:absolute;left:830.5px;top:166.6px;width:2.0px;height:0.8000000000000114px;background:#d4d4d4"></div>
<div style="position:absolute;left:833.2px;top:169.4px;width:400px;height:12px;line-height:12px;font-size:9.3px;font-family:'Liberation Mono', monospace;color:#111;text-align:left;white-space:pre;transform:scaleY(1.12);-webkit-text-stroke:0.15px #111">&gt;&gt;&gt; ddsgen.root.initialize()</div>
<div style="position:absolute;left:830.5px;top:170.4px;width:1.0px;height:9.0px;background:#c4c4c4"></div>
<div style="position:absolute;left:830.5px;top:170.4px;width:2.0px;height:0.8000000000000114px;background:#d4d4d4"></div>
<div style="position:absolute;left:830.5px;top:178.6px;width:2.0px;height:0.8000000000000114px;background:#d4d4d4"></div>
<div style="position:absolute;left:833.2px;top:181.4px;width:400px;height:12px;line-height:12px;font-size:9.3px;font-family:'Liberation Mono', monospace;color:#111;text-align:left;white-space:pre;transform:scaleY(1.12);-webkit-text-stroke:0.15px #111">&gt;&gt;&gt;</div>
<div style="position:absolute;left:830.5px;top:182.4px;width:1.0px;height:9.0px;background:#c4c4c4"></div>
<div style="position:absolute;left:830.5px;top:182.4px;width:2.0px;height:0.8000000000000114px;background:#d4d4d4"></div>
<div style="position:absolute;left:830.5px;top:190.6px;width:2.0px;height:0.8000000000000114px;background:#d4d4d4"></div>
<div style="position:absolute;left:833.2px;top:193.4px;width:400px;height:12px;line-height:12px;font-size:9.3px;font-family:'Liberation Mono', monospace;color:#111;text-align:left;white-space:pre;transform:scaleY(1.12);-webkit-text-stroke:0.15px #111">&gt;&gt;&gt; dds1.freq = 11.5</div>
<div style="position:absolute;left:830.5px;top:194.4px;width:1.0px;height:9.0px;background:#c4c4c4"></div>
<div style="position:absolute;left:830.5px;top:194.4px;width:2.0px;height:0.8000000000000114px;background:#d4d4d4"></div>
<div style="position:absolute;left:830.5px;top:202.6px;width:2.0px;height:0.8000000000000114px;background:#d4d4d4"></div>
<div style="position:absolute;left:833.2px;top:205.4px;width:400px;height:12px;line-height:12px;font-size:9.3px;font-family:'Liberation Mono', monospace;color:#111;text-align:left;white-space:pre;transform:scaleY(1.12);-webkit-text-stroke:0.15px #111">&gt;&gt;&gt; dds1.dbm = -10.0</div>
<div style="position:absolute;left:830.5px;top:206.4px;width:1.0px;height:9.0px;background:#c4c4c4"></div>
<div style="position:absolute;left:830.5px;top:206.4px;width:2.0px;height:0.8000000000000114px;background:#d4d4d4"></div>
<div style="position:absolute;left:830.5px;top:214.6px;width:2.0px;height:0.8000000000000114px;background:#d4d4d4"></div>
<div style="position:absolute;left:833.2px;top:217.4px;width:400px;height:12px;line-height:12px;font-size:9.3px;font-family:'Liberation Mono', monospace;color:#111;text-align:left;white-space:pre;transform:scaleY(1.12);-webkit-text-stroke:0.15px #111">&gt;&gt;&gt; dds1.state = ad9913.POWER_UP</div>
<div style="position:absolute;left:830.5px;top:218.4px;width:1.0px;height:9.0px;background:#c4c4c4"></div>
<div style="position:absolute;left:830.5px;top:218.4px;width:2.0px;height:0.8000000000000114px;background:#d4d4d4"></div>
<div style="position:absolute;left:830.5px;top:226.6px;width:2.0px;height:0.8000000000000114px;background:#d4d4d4"></div>
<div style="position:absolute;left:833.2px;top:229.4px;width:400px;height:12px;line-height:12px;font-size:9.3px;font-family:'Liberation Mono', monospace;color:#111;text-align:left;white-space:pre;transform:scaleY(1.12);-webkit-text-stroke:0.15px #111">&gt;&gt;&gt; ddsgen.root.configure('Chan 1')</div>
<div style="position:absolute;left:830.5px;top:230.4px;width:1.0px;height:9.0px;background:#c4c4c4"></div>
<div style="position:absolute;left:830.5px;top:230.4px;width:2.0px;height:0.8000000000000114px;background:#d4d4d4"></div>
<div style="position:absolute;left:830.5px;top:238.6px;width:2.0px;height:0.8000000000000114px;background:#d4d4d4"></div>
<div style="position:absolute;left:833.2px;top:241.4px;width:400px;height:12px;line-height:12px;font-size:9.3px;font-family:'Liberation Mono', monospace;color:#111;text-align:left;white-space:pre;transform:scaleY(1.12);-webkit-text-stroke:0.15px #111">&gt;&gt;&gt;</div>
<div style="position:absolute;left:830.5px;top:242.4px;width:1.0px;height:9.0px;background:#c4c4c4"></div>
<div style="position:absolute;left:830.5px;top:242.4px;width:2.0px;height:0.8000000000000114px;background:#d4d4d4"></div>
<div style="position:absolute;left:830.5px;top:250.6px;width:2.0px;height:0.8000000000000114px;background:#d4d4d4"></div>
<div style="position:absolute;left:833.2px;top:253.4px;width:400px;height:12px;line-height:12px;font-size:9.3px;font-family:'Liberation Mono', monospace;color:#111;text-align:left;white-space:pre;transform:scaleY(1.12);-webkit-text-stroke:0.15px #111">&gt;&gt;&gt; dds2.freq = 23.0</div>
<div style="position:absolute;left:830.5px;top:254.39999999999998px;width:1.0px;height:9.0px;background:#c4c4c4"></div>
<div style="position:absolute;left:830.5px;top:254.39999999999998px;width:2.0px;height:0.8000000000000114px;background:#d4d4d4"></div>
<div style="position:absolute;left:830.5px;top:262.59999999999997px;width:2.0px;height:0.8000000000000114px;background:#d4d4d4"></div>
<div style="position:absolute;left:833.2px;top:265.4px;width:400px;height:12px;line-height:12px;font-size:9.3px;font-family:'Liberation Mono', monospace;color:#111;text-align:left;white-space:pre;transform:scaleY(1.12);-webkit-text-stroke:0.15px #111">&gt;&gt;&gt; dds2.dbm = -15.0</div>
<div style="position:absolute;left:830.5px;top:266.4px;width:1.0px;height:9.0px;background:#c4c4c4"></div>
<div style="position:absolute;left:830.5px;top:266.4px;width:2.0px;height:0.8000000000000114px;background:#d4d4d4"></div>
<div style="position:absolute;left:830.5px;top:274.59999999999997px;width:2.0px;height:0.8000000000000114px;background:#d4d4d4"></div>
<div style="position:absolute;left:833.2px;top:277.4px;width:400px;height:12px;line-height:12px;font-size:9.3px;font-family:'Liberation Mono', monospace;color:#111;text-align:left;white-space:pre;transform:scaleY(1.12);-webkit-text-stroke:0.15px #111">&gt;&gt;&gt; dds2.state = ad9913.POWER_UP</div>
<div style="position:absolute;left:830.5px;top:278.4px;width:1.0px;height:9.0px;background:#c4c4c4"></div>
<div style="position:absolute;left:830.5px;top:278.4px;width:2.0px;height:0.8000000000000114px;background:#d4d4d4"></div>
<div style="position:absolute;left:830.5px;top:286.59999999999997px;width:2.0px;height:0.8000000000000114px;background:#d4d4d4"></div>
<div style="position:absolute;left:833.2px;top:289.4px;width:400px;height:12px;line-height:12px;font-size:9.3px;font-family:'Liberation Mono', monospace;color:#111;text-align:left;white-space:pre;transform:scaleY(1.12);-webkit-text-stroke:0.15px #111">&gt;&gt;&gt; ddsgen.root.configure('Chan 2')</div>
<div style="position:absolute;left:830.5px;top:290.4px;width:1.0px;height:9.0px;background:#c4c4c4"></div>
<div style="position:absolute;left:830.5px;top:290.4px;width:2.0px;height:0.8000000000000114px;background:#d4d4d4"></div>
<div style="position:absolute;left:830.5px;top:298.59999999999997px;width:2.0px;height:0.8000000000000114px;background:#d4d4d4"></div>
<div style="position:absolute;left:833.2px;top:301.4px;width:400px;height:12px;line-height:12px;font-size:9.3px;font-family:'Liberation Mono', monospace;color:#111;text-align:left;white-space:pre;transform:scaleY(1.12);-webkit-text-stroke:0.15px #111">&gt;&gt;&gt; <span style="background:#222">&nbsp;</span></div>
<svg style="position:absolute;left:0;top:0" width="1084" height="676"><path d="M835,52.2 L838,55.5 L835,58.8" fill="none" stroke="#3fae4c" stroke-width="1.15"/></svg>
<div style="position:absolute;left:392px;top:302.5px;width:692px;height:373.5px;background:#e9eaec"></div>
<div style="position:absolute;left:392px;top:302.5px;width:692px;height:18.0px;background:linear-gradient(#e7e8ea,#d6d7d9 55%,#cfd0d2);border-bottom:1px solid #b9babc;box-sizing:border-box"></div>
<div style="position:absolute;left:398.7px;top:307.2px;width:9.6px;height:9.6px;border-radius:50%;background:#f4514d;box-sizing:border-box;border:0.5px solid #d63d39"></div>
<div style="position:absolute;left:414.9px;top:307.2px;width:9.6px;height:9.6px;border-radius:50%;background:#f8b72c;box-sizing:border-box;border:0.5px solid #dc9c1e"></div>
<div style="position:absolute;left:430.8px;top:307.2px;width:9.6px;height:9.6px;border-radius:50%;background:#25c135;box-sizing:border-box;border:0.5px solid #16a025"></div>
<div style="position:absolute;left:709.4px;top:305.0px;width:300px;height:14px;line-height:14px;font-size:11px;font-family:'Liberation Sans', sans-serif;color:#3a3a3a;text-align:center;white-space:pre;">DDS Signal Generator</div>
<div style="position:absolute;left:408.7px;top:344.1px;width:300px;height:14px;line-height:14px;font-size:11px;font-family:'Liberation Sans', sans-serif;color:#161616;text-align:left;white-space:pre;">Control Port:</div>
<div style="position:absolute;left:474.2px;top:339.6px;width:169.09999999999997px;height:21.599999999999966px;background:#92b8ec;border-radius:4px"></div>
<div style="position:absolute;left:477.5px;top:343px;width:162.5px;height:15px;background:#fff;border-radius:2px"></div>
<div style="position:absolute;left:626.5px;top:343px;width:13.5px;height:15px;background:linear-gradient(#5ea8f8,#1b6ff0);border-radius:0 2px 2px 0"></div>
<svg style="position:absolute;left:0;top:0" width="1084" height="676"><path d="M630.8,349 L633.2,351.4 L635.6,349" fill="none" stroke="#fff" stroke-width="1.2"/></svg>
<div style="position:absolute;left:480.2px;top:344.1px;width:300px;height:14px;line-height:14px;font-size:10.6px;font-family:'Liberation Sans', sans-serif;color:#1a1a1a;text-align:left;white-space:pre;">socket://192.168.0.155:7001</div>
<div style="position:absolute;left:612px;top:344.5px;width:0.7999999999999545px;height:12.5px;background:#222"></div>
<div style="position:absolute;left:408.7px;top:380.6px;width:300px;height:14px;line-height:14px;font-size:11px;font-family:'Liberation Sans', sans-serif;color:#161616;text-align:left;white-space:pre;">Ref. Source:</div>
<div style="position:absolute;left:473.4px;top:381.6px;width:12px;height:12px;border-radius:50%;background:linear-gradient(#5aa6f8,#1f70ee);box-sizing:border-box"></div>
<div style="position:absolute;left:476.9px;top:385.1px;width:5px;height:5px;border-radius:50%;background:#fff"></div>
<div style="position:absolute;left:489.3px;top:380.2px;width:300px;height:14px;line-height:14px;font-size:10.7px;font-family:'Liberation Sans', sans-serif;color:#161616;text-align:left;white-space:pre;">Internal</div>
<div style="position:absolute;left:538.2px;top:381.6px;width:12px;height:12px;border-radius:50%;background:#fff;box-shadow:0 0.5px 1px rgba(0,0,0,.3),0 0 0 0.5px rgba(0,0,0,.12)"></div>
<div style="position:absolute;left:554.5px;top:380.2px;width:300px;height:14px;line-height:14px;font-size:10.7px;font-family:'Liberation Sans', sans-serif;color:#161616;text-align:left;white-space:pre;">External</div>
<div style="position:absolute;left:413.9px;top:411.6px;width:300px;height:12px;line-height:12px;font-size:9.0px;font-family:'Liberation Sans', sans-serif;color:#262626;text-align:left;white-space:pre;">Chan 1 (27dB-RF)</div>
<div style="position:absolute;left:408px;top:423px;width:286px;height:267px;background:#e0e1e3;border-radius:4px"></div>
<div style="position:absolute;left:416.0px;top:440.0px;width:80px;height:14px;line-height:14px;font-size:11px;font-family:'Liberation Sans', sans-serif;color:#161616;text-align:right;white-space:pre;">Freq.:</div>
<div style="position:absolute;left:504.2px;top:436.4px;width:149.09999999999997px;height:24.0px;background:#fff;box-shadow:0 0 0 0.5px rgba(0,0,0,.12)"></div>
<div style="position:absolute;left:505.5px;top:436.0px;width:300px;height:26px;line-height:26px;font-size:19.7px;font-family:'Liberation Sans', sans-serif;color:#111;text-align:left;white-space:pre;">11.50000 MHz</div>
<div style="position:absolute;left:656px;top:440.7px;width:8.700000000000045px;height:15.300000000000011px;background:#fff;border-radius:3px;box-shadow:0 0.5px 1px rgba(0,0,0,.3)"></div>
<svg style="position:absolute;left:0;top:0" width="1084" height="676"><path d="M658.35,446.35 L660.35,444.35 L662.35,446.35 M658.35,450.35 L660.35,452.35 L662.35,450.35" fill="none" stroke="#222" stroke-width="1.1"/></svg>
<div style="position:absolute;left:415.5px;top:474.3px;width:80px;height:14px;line-height:14px;font-size:11px;font-family:'Liberation Sans', sans-serif;color:#161616;text-align:right;white-space:pre;">Phase:</div>
<div style="position:absolute;left:504.2px;top:471.5px;width:78.09999999999997px;height:23.19999999999999px;background:#fff;box-shadow:0 0 0 0.5px rgba(0,0,0,.12)"></div>
<div style="position:absolute;left:505.5px;top:471.0px;width:300px;height:26px;line-height:26px;font-size:19.7px;font-family:'Liberation Sans', sans-serif;color:#111;text-align:left;white-space:pre;">0.00°</div>
<div style="position:absolute;left:585px;top:476.7px;width:8.200000000000045px;height:13.800000000000011px;background:#fff;border-radius:3px;box-shadow:0 0.5px 1px rgba(0,0,0,.3)"></div>
<svg style="position:absolute;left:0;top:0" width="1084" height="676"><path d="M587.1,481.6 L589.1,479.6 L591.1,481.6 M587.1,485.6 L589.1,487.6 L591.1,485.6" fill="none" stroke="#222" stroke-width="1.1"/></svg>
<div style="position:absolute;left:416.0px;top:512.0px;width:80px;height:14px;line-height:14px;font-size:11px;font-family:'Liberation Sans', sans-serif;color:#161616;text-align:right;white-space:pre;">Level:</div>
<div style="position:absolute;left:504.2px;top:511.7px;width:97.80000000000001px;height:23.599999999999966px;background:#fff;box-shadow:0 0 0 0.5px rgba(0,0,0,.12)"></div>
<div style="position:absolute;left:505.5px;top:511.3px;width:300px;height:26px;line-height:26px;font-size:19.7px;font-family:'Liberation Sans', sans-serif;color:#111;text-align:left;white-space:pre;">-10.0 dBm</div>
<div style="position:absolute;left:605.3px;top:516.3px;width:8.200000000000045px;height:14.700000000000045px;background:#fff;border-radius:3px;box-shadow:0 0.5px 1px rgba(0,0,0,.3)"></div>
<svg style="position:absolute;left:0;top:0" width="1084" height="676"><path d="M607.4,521.65 L609.4,519.65 L611.4,521.65 M607.4,525.65 L609.4,527.65 L611.4,525.65" fill="none" stroke="#222" stroke-width="1.1"/></svg>
<div style="position:absolute;left:627px;top:516.3px;width:53.39999999999998px;height:15.300000000000068px;background:#fff;border-radius:3px;box-shadow:0 0.5px 1px rgba(0,0,0,.3)"></div>
<div style="position:absolute;left:668px;top:516.3px;width:12.399999999999977px;height:15.300000000000068px;background:linear-gradient(#5ea8f8,#1b6ff0);border-radius:0 3px 3px 0"></div>
<svg style="position:absolute;left:0;top:0" width="1084" height="676"><path d="M671.8,522.5 L674.2,524.9 L676.6,522.5" fill="none" stroke="#fff" stroke-width="1.2"/></svg>
<div style="position:absolute;left:615.5px;top:517.3px;width:60px;height:14px;line-height:14px;font-size:11px;font-family:'Liberation Sans', sans-serif;color:#161616;text-align:center;white-space:pre;">Units</div>
<div style="position:absolute;left:422.7px;top:554.1px;width:300px;height:14px;line-height:14px;font-size:11px;font-family:'Liberation Sans', sans-serif;color:#161616;text-align:left;white-space:pre;">Programmable:</div>
<div style="position:absolute;left:422.7px;top:566.8px;width:300px;height:14px;line-height:14px;font-size:11px;font-family:'Liberation Sans', sans-serif;color:#161616;text-align:left;white-space:pre;">Modulus</div>
<div style="position:absolute;left:503px;top:554.5px;width:11px;height:10.0px;background:#fff;border-radius:2px;box-shadow:0 0.5px 1px rgba(0,0,0,.3)"></div>
<div style="position:absolute;left:415.6px;top:585.7px;width:80px;height:14px;line-height:14px;font-size:11px;font-family:'Liberation Sans', sans-serif;color:#161616;text-align:right;white-space:pre;">Active:</div>
<div style="position:absolute;left:503px;top:586.3px;width:11px;height:10.5px;background:linear-gradient(#5aa6f8,#1f70ee);border-radius:2px"></div>
<svg style="position:absolute;left:0;top:0" width="1084" height="676"><path d="M505.5,591.5 L507.8,594 L511.8,588.3" fill="none" stroke="#fff" stroke-width="1.3"/></svg>
<div style="position:absolute;left:425.8px;top:641px;width:70.39999999999998px;height:15.299999999999955px;background:#ffffff;border-radius:3px;box-shadow:0 0.5px 1px rgba(0,0,0,.22),0 0 0 0.5px rgba(0,0,0,.08)"></div>
<div style="position:absolute;left:411.0px;top:640.9px;width:100px;height:14px;line-height:14px;font-size:11px;font-family:'Liberation Sans', sans-serif;color:#161616;text-align:center;white-space:pre;">Configure</div>
<div style="position:absolute;left:713.3px;top:411.6px;width:300px;height:12px;line-height:12px;font-size:9.0px;font-family:'Liberation Sans', sans-serif;color:#262626;text-align:left;white-space:pre;">Chan 2 (20dB)</div>
<div style="position:absolute;left:707.4px;top:423px;width:286.0px;height:267px;background:#e0e1e3;border-radius:4px"></div>
<div style="position:absolute;left:715.4px;top:440.0px;width:80px;height:14px;line-height:14px;font-size:11px;font-family:'Liberation Sans', sans-serif;color:#161616;text-align:right;white-space:pre;">Freq.:</div>
<div style="position:absolute;left:803.5999999999999px;top:436.4px;width:149.10000000000002px;height:24.0px;background:#fff;box-shadow:0 0 0 0.5px rgba(0,0,0,.12)"></div>
<div style="position:absolute;left:804.9px;top:436.0px;width:300px;height:26px;line-height:26px;font-size:19.7px;font-family:'Liberation Sans', sans-serif;color:#111;text-align:left;white-space:pre;">23.00000 MHz</div>
<div style="position:absolute;left:955.4px;top:440.7px;width:8.700000000000045px;height:15.300000000000011px;background:#fff;border-radius:3px;box-shadow:0 0.5px 1px rgba(0,0,0,.3)"></div>
<svg style="position:absolute;left:0;top:0" width="1084" height="676"><path d="M957.75,446.35 L959.75,444.35 L961.75,446.35 M957.75,450.35 L959.75,452.35 L961.75,450.35" fill="none" stroke="#222" stroke-width="1.1"/></svg>
<div style="position:absolute;left:714.9px;top:474.3px;width:80px;height:14px;line-height:14px;font-size:11px;font-family:'Liberation Sans', sans-serif;color:#161616;text-align:right;white-space:pre;">Phase:</div>
<div style="position:absolute;left:803.5999999999999px;top:471.5px;width:78.10000000000002px;height:23.19999999999999px;background:#fff;box-shadow:0 0 0 0.5px rgba(0,0,0,.12)"></div>
<div style="position:absolute;left:804.9px;top:471.0px;width:300px;height:26px;line-height:26px;font-size:19.7px;font-family:'Liberation Sans', sans-serif;color:#111;text-align:left;white-space:pre;">0.00°</div>
<div style="position:absolute;left:884.4px;top:476.7px;width:8.200000000000045px;height:13.800000000000011px;background:#fff;border-radius:3px;box-shadow:0 0.5px 1px rgba(0,0,0,.3)"></div>
<svg style="position:absolute;left:0;top:0" width="1084" height="676"><path d="M886.5,481.6 L888.5,479.6 L890.5,481.6 M886.5,485.6 L888.5,487.6 L890.5,485.6" fill="none" stroke="#222" stroke-width="1.1"/></svg>
<div style="position:absolute;left:715.4px;top:512.0px;width:80px;height:14px;line-height:14px;font-size:11px;font-family:'Liberation Sans', sans-serif;color:#161616;text-align:right;white-space:pre;">Level:</div>
<div style="position:absolute;left:803.5999999999999px;top:511.7px;width:97.80000000000007px;height:23.599999999999966px;background:#fff;box-shadow:0 0 0 0.5px rgba(0,0,0,.12)"></div>
<div style="position:absolute;left:804.9px;top:511.3px;width:300px;height:26px;line-height:26px;font-size:19.7px;font-family:'Liberation Sans', sans-serif;color:#111;text-align:left;white-space:pre;">-15.0 dBm</div>
<div style="position:absolute;left:904.6999999999999px;top:516.3px;width:8.200000000000045px;height:14.700000000000045px;background:#fff;border-radius:3px;box-shadow:0 0.5px 1px rgba(0,0,0,.3)"></div>
<svg style="position:absolute;left:0;top:0" width="1084" height="676"><path d="M906.8,521.65 L908.8,519.65 L910.8,521.65 M906.8,525.65 L908.8,527.65 L910.8,525.65" fill="none" stroke="#222" stroke-width="1.1"/></svg>
<div style="position:absolute;left:926.4px;top:516.3px;width:53.39999999999998px;height:15.300000000000068px;background:#fff;border-radius:3px;box-shadow:0 0.5px 1px rgba(0,0,0,.3)"></div>
<div style="position:absolute;left:967.4px;top:516.3px;width:12.399999999999977px;height:15.300000000000068px;background:linear-gradient(#5ea8f8,#1b6ff0);border-radius:0 3px 3px 0"></div>
<svg style="position:absolute;left:0;top:0" width="1084" height="676"><path d="M971.1999999999999,522.5 L973.6,524.9 L976.0,522.5" fill="none" stroke="#fff" stroke-width="1.2"/></svg>
<div style="position:absolute;left:914.9px;top:517.3px;width:60px;height:14px;line-height:14px;font-size:11px;font-family:'Liberation Sans', sans-serif;color:#161616;text-align:center;white-space:pre;">Units</div>
<div style="position:absolute;left:722.1px;top:554.1px;width:300px;height:14px;line-height:14px;font-size:11px;font-family:'Liberation Sans', sans-serif;color:#161616;text-align:left;white-space:pre;">Programmable:</div>
<div style="position:absolute;left:722.1px;top:566.8px;width:300px;height:14px;line-height:14px;font-size:11px;font-family:'Liberation Sans', sans-serif;color:#161616;text-align:left;white-space:pre;">Modulus</div>
<div style="position:absolute;left:802.4px;top:554.5px;width:11.0px;height:10.0px;background:#fff;border-radius:2px;box-shadow:0 0.5px 1px rgba(0,0,0,.3)"></div>
<div style="position:absolute;left:715.0px;top:585.7px;width:80px;height:14px;line-height:14px;font-size:11px;font-family:'Liberation Sans', sans-serif;color:#161616;text-align:right;white-space:pre;">Active:</div>
<div style="position:absolute;left:802.4px;top:586.3px;width:11.0px;height:10.5px;background:linear-gradient(#5aa6f8,#1f70ee);border-radius:2px"></div>
<svg style="position:absolute;left:0;top:0" width="1084" height="676"><path d="M804.9,591.5 L807.2,594 L811.2,588.3" fill="none" stroke="#fff" stroke-width="1.3"/></svg>
<div style="position:absolute;left:725.2px;top:641px;width:70.39999999999986px;height:15.299999999999955px;background:#ffffff;border-radius:3px;box-shadow:0 0.5px 1px rgba(0,0,0,.22),0 0 0 0.5px rgba(0,0,0,.08)"></div>
<div style="position:absolute;left:710.4px;top:640.9px;width:100px;height:14px;line-height:14px;font-size:11px;font-family:'Liberation Sans', sans-serif;color:#161616;text-align:center;white-space:pre;">Configure</div>
<div style="position:absolute;left:1012.8px;top:411.5px;width:300px;height:12px;line-height:12px;font-size:8.9px;font-family:'Liberation Sans', sans-serif;color:#b2b2b2;text-align:left;white-space:pre;">Aux. Clk</div>
<div style="position:absolute;left:1006.5px;top:423px;width:93.5px;height:267px;background:#e0e1e3;border-radius:4px"></div>
<div style="position:absolute;left:1022.5px;top:440.0px;width:300px;height:14px;line-height:14px;font-size:11px;font-family:'Liberation Sans', sans-serif;color:#b0b0b0;text-align:left;white-space:pre;">Freq. (MHz):</div>
<div style="position:absolute;left:1024.7px;top:476.8px;width:300px;height:12px;line-height:12px;font-size:8.9px;font-family:'Liberation Sans', sans-serif;color:#b2b2b2;text-align:left;white-space:pre;">Channel 2</div>
<div style="position:absolute;left:1019px;top:488.5px;width:81px;height:170.89999999999998px;background:#d9dadc;border-radius:4px"></div>
<div style="position:absolute;left:1053.0px;top:500.4px;width:300px;height:14px;line-height:14px;font-size:11px;font-family:'Liberation Sans', sans-serif;color:#b0b0b0;text-align:left;white-space:pre;">Active:</div>
<div style="position:absolute;left:1056.5px;top:526.5px;width:300px;height:14px;line-height:14px;font-size:11px;font-family:'Liberation Sans', sans-serif;color:#b0b0b0;text-align:left;white-space:pre;">Mode:</div>
<div style="position:absolute;left:1057.0px;top:590.8px;width:300px;height:14px;line-height:14px;font-size:11px;font-family:'Liberation Sans', sans-serif;color:#b0b0b0;text-align:left;white-space:pre;">Drive:</div>
<div style="position:absolute;left:1034.3px;top:616.9px;width:300px;height:14px;line-height:14px;font-size:11px;font-family:'Liberation Sans', sans-serif;color:#b0b0b0;text-align:left;white-space:pre;">CMOS Pol:</div>
</div></body></html>
